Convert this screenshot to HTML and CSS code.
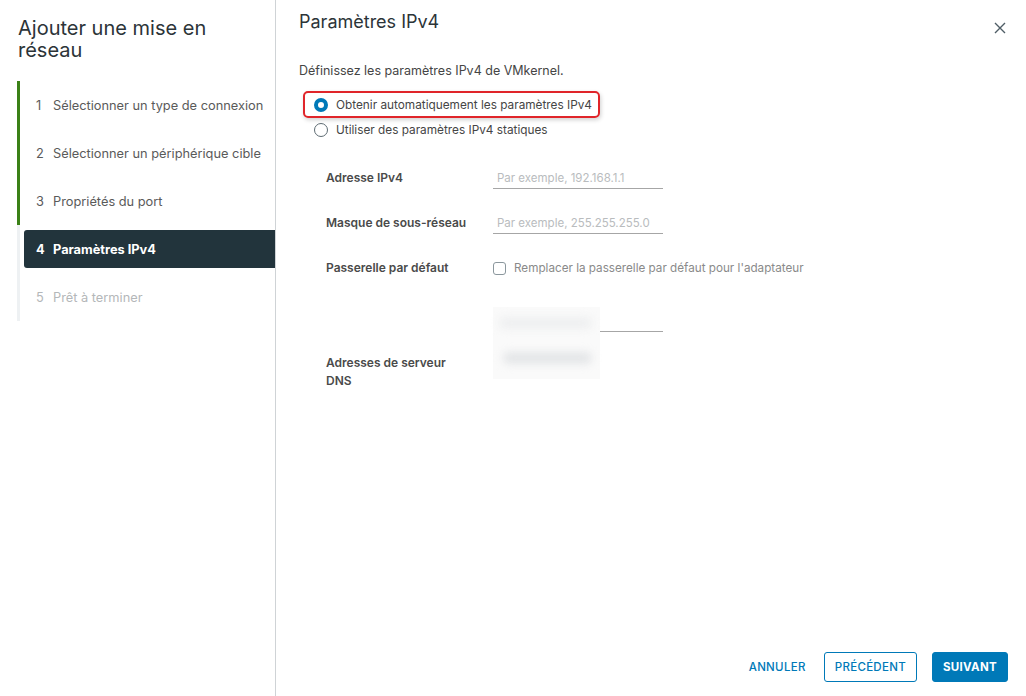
FILE: index.html
```html
<!DOCTYPE html>
<html lang="fr">
<head>
<meta charset="utf-8">
<link rel="stylesheet" href="styles.css">
</head>
<body>
<div class="dialog">
  <aside class="sidebar">
    <h1 class="side-title">Ajouter une mise en réseau</h1>
    <ol class="steps">
      <li class="step done"><span class="num">1</span><span>Sélectionner un type de connexion</span></li>
      <li class="step done"><span class="num">2</span><span>Sélectionner un périphérique cible</span></li>
      <li class="step done"><span class="num">3</span><span>Propriétés du port</span></li>
      <li class="step active"><span class="num">4</span><span>Paramètres IPv4</span></li>
      <li class="step todo"><span class="num">5</span><span>Prêt à terminer</span></li>
    </ol>
  </aside>
  <main class="main">
    <header class="main-head">
      <h2 class="main-title">Paramètres IPv4</h2>
      <button class="close" aria-label="Fermer">
        <svg width="12" height="12" viewBox="0 0 12 12"><path d="M1 1L11 11M11 1L1 11" stroke="#4f5e66" stroke-width="1.4" fill="none"/></svg>
      </button>
    </header>
    <p class="intro">Définissez les paramètres IPv4 de VMkernel.</p>
    <div class="radios">
      <label class="radio highlighted"><span class="dot checked"></span>Obtenir automatiquement les paramètres IPv4</label>
      <label class="radio"><span class="dot"></span>Utiliser des paramètres IPv4 statiques</label>
    </div>
    <div class="form">
      <div class="row">
        <div class="lbl">Adresse IPv4</div>
        <div class="field"><span class="ph">Par exemple, 192.168.1.1</span></div>
      </div>
      <div class="row">
        <div class="lbl">Masque de sous-réseau</div>
        <div class="field"><span class="ph">Par exemple, 255.255.255.0</span></div>
      </div>
      <div class="row">
        <div class="lbl">Passerelle par défaut</div>
        <label class="check"><span class="box"></span>Remplacer la passerelle par défaut pour l'adaptateur</label>
      </div>
      <div class="row dns">
        <div class="lbl dns-lbl">Adresses de serveur DNS</div>
        <div class="dns-fields">
          <div class="field dns-field"></div>
          <div class="blur"><span class="bar1"></span><span class="bar2"></span></div>
        </div>
      </div>
    </div>
    <footer class="footer">
      <button class="btn link">ANNULER</button>
      <button class="btn outline">PRÉCÉDENT</button>
      <button class="btn primary">SUIVANT</button>
    </footer>
  </main>
</div>
</body>
</html>
```
FILE: styles.css
```css
* { box-sizing: border-box; }
html, body { margin: 0; padding: 0; }
body {
  font-family: Inter, "Noto Sans", sans-serif;
  color: #333;
  background: #fff;
  width: 1026px;
  height: 696px;
  overflow: hidden;
}
.dialog { display: flex; height: 696px; }
.sidebar {
  width: 276px;
  border-right: 1px solid #cfd3d6;
  padding: 17px 0 0 0;
}
.side-title {
  margin: 0 0 0 18px;
  font-size: 20px;
  font-weight: 400;
  line-height: 22px;
  color: #2c3438;
  width: 230px;
}
.steps {
  list-style: none;
  margin: 20px 0 0 17px;
  padding: 0;
  border-left: 3px solid #eef1f3;
}
.step {
  display: flex;
  align-items: center;
  height: 48px;
  font-size: 12.8px;
  color: #5a5a5a;
  padding-left: 16px;
  margin-left: -3px;
  border-left: 3px solid transparent;
}
.step .num { width: 17px; }
.step.done { border-left-color: #3b8117; }
.step.active {
  background: #22343c;
  color: #fff;
  font-weight: 700;
  height: 38px;
  margin: 5px 0 5px 4px;
  border-left: 0;
  border-radius: 3px 0 0 3px;
  padding-left: 12px;
}
.step.todo { color: #b4b7b9; }
.main {
  flex: 1;
  display: flex;
  flex-direction: column;
  padding: 0 18px 14px 23px;
}
.main-head {
  display: flex;
  justify-content: space-between;
  align-items: flex-start;
  padding-top: 11px;
}
.main-title {
  margin: 0;
  font-size: 18px;
  font-weight: 400;
  line-height: 22px;
  color: #2c3438;
}
.close {
  border: 0;
  background: none;
  padding: 0;
  margin-top: 11px;
  margin-right: 2px;
  width: 12px;
  height: 12px;
  display: flex;
}
.intro {
  margin: 29px 0 0 0;
  font-size: 12.5px;
  line-height: 16px;
  color: #454545;
}
.radios { margin-top: 12px; display: flex; flex-direction: column; }
.radio {
  display: flex;
  align-items: center;
  gap: 8px;
  font-size: 11.8px;
  color: #454545;
  height: 26px;
  padding-left: 11px;
  width: 297px;
  margin-left: 4px;
  white-space: nowrap;
}
.radio.highlighted {
  border: 2px solid #e0252a;
  border-radius: 5px;
  box-shadow: 1px 2px 4px rgba(0,0,0,0.18);
  height: 27px;
  padding-left: 9px;
  margin-bottom: -1px;
}
.dot {
  width: 14px;
  height: 14px;
  border-radius: 50%;
  border: 1px solid #5d6b72;
  background: #fff;
  flex: none;
}
.dot.checked {
  border: 4px solid #0079b8;
  background: #fff;
}
.form { margin-top: 26px; padding-left: 27px; display: flex; flex-direction: column; }
.row {
  display: grid;
  grid-template-columns: 167px auto;
  align-items: start;
  height: 45px;
}
.lbl {
  font-size: 12px;
  font-weight: 600;
  color: #4a4a4a;
  line-height: 18px;
}
.field {
  width: 170px;
  border-bottom: 1px solid #a6a6a6;
  height: 20px;
  padding-left: 4px;
  font-size: 11.5px;
  line-height: 18px;
}
.ph { color: #b9bcbe; }
.check {
  display: flex;
  align-items: center;
  gap: 8px;
  font-size: 11.7px;
  color: #8a8a8a;
  line-height: 18px;
}
.box {
  width: 13px;
  height: 13px;
  border: 1px solid #8b979d;
  border-radius: 3px;
  flex: none;
}
.row.dns { height: auto; margin-top: 3px; }
.dns-lbl { width: 140px; margin-top: 47px; }
.dns-fields { position: relative; width: 170px; height: 80px; }
.dns-field { position: absolute; left: 0; top: 5px; height: 20px; }
.blur {
  position: absolute;
  left: 0;
  top: 0;
  width: 107px;
  height: 72px;
  background: #fafafa;
}
.blur .bar1, .blur .bar2 {
  position: absolute;
  left: 6px;
  right: 8px;
  border-radius: 6px;
  filter: blur(4px);
}
.blur .bar1 { top: 10px; height: 12px; background: #eeeff0; }
.blur .bar2 { top: 45px; height: 12px; background: #e3e5e7; left: 10px; }
.footer {
  margin-top: auto;
  display: flex;
  justify-content: flex-end;
  align-items: center;
  gap: 15px;
}
.btn {
  font-family: inherit;
  font-size: 11.5px;
  font-weight: 500;
  letter-spacing: 0.3px;
  height: 30px;
  border-radius: 3px;
  padding: 0 10px;
  cursor: pointer;
}
.btn.link { background: none; border: 0; color: #0079b8; padding-right: 0; margin-right: 3px; }
.btn.outline { background: #fff; border: 1px solid #0079b8; color: #0079b8; }
.btn.primary { background: #0079b8; border: 1px solid #0079b8; color: #fff; font-weight: 700; }
```
